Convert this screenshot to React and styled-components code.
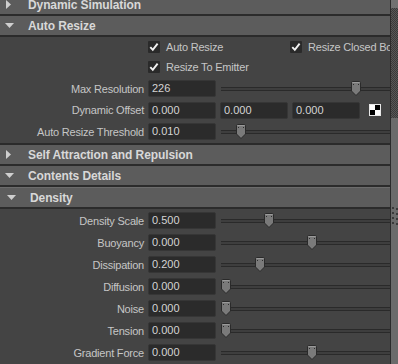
import styled, { createGlobalStyle } from 'styled-components';

const GlobalStyle = createGlobalStyle`
  html, body {
    margin: 0;
    padding: 0;
    background: #444444;
  }
  body {
    font-family: "Liberation Sans", Arial, sans-serif;
  }
`;

const autoResizeRows = [
  { label: 'Max Resolution', value: '226', pos: 135 },
];

const densityRows = [
  { label: 'Density Scale', value: '0.500', pos: 48 },
  { label: 'Buoyancy', value: '0.000', pos: 91 },
  { label: 'Dissipation', value: '0.200', pos: 39 },
  { label: 'Diffusion', value: '0.000', pos: 5 },
  { label: 'Noise', value: '0.000', pos: 5 },
  { label: 'Tension', value: '0.000', pos: 5 },
  { label: 'Gradient Force', value: '0.000', pos: 91 },
];

function Arrow({ open }) {
  return open ? (
    <svg width="9" height="5" viewBox="0 0 9 5">
      <path d="M0 0 H9 L4.5 5 Z" fill="#cfcfcf" />
    </svg>
  ) : (
    <svg width="5" height="9" viewBox="0 0 5 9">
      <path d="M0 0 L5 4.5 L0 9 Z" fill="#cfcfcf" />
    </svg>
  );
}

function Section({ title, open, nested }) {
  return (
    <Header $nested={nested}>
      <ArrowBox $nested={nested} $open={open}>
        <Arrow open={open} />
      </ArrowBox>
      {title}
    </Header>
  );
}

function Check({ label }) {
  return (
    <CheckItem>
      <Box>
        <svg width="12" height="12" viewBox="0 0 12 12">
          <path d="M2.3 6.2 L4.8 8.9 L9.6 2.6" fill="none" stroke="#f2f2f2" strokeWidth="1.9" />
        </svg>
      </Box>
      {label}
    </CheckItem>
  );
}

function Slider({ pos }) {
  return (
    <SliderBox>
      <Track />
      <Thumb style={{ left: pos - 5 }}>
        <svg width="10" height="15" viewBox="0 0 10 15">
          <path
            d="M0.5 1.5 Q0.5 0.5 1.5 0.5 H8.5 Q9.5 0.5 9.5 1.5 V10 L5 14.5 L0.5 10 Z"
            fill="#7a7a7a"
            stroke="#2a2a2a"
          />
          <path d="M1.5 1.5 H8.5" stroke="#9a9a9a" />
          <rect x="2" y="3" width="1" height="1" fill="#2e2e2e" />
          <rect x="7" y="3" width="1" height="1" fill="#2e2e2e" />
        </svg>
      </Thumb>
    </SliderBox>
  );
}

function SliderRow({ label, value, pos }) {
  return (
    <Row>
      <Label>{label}</Label>
      <Field>{value}</Field>
      <Slider pos={pos} />
    </Row>
  );
}

export default function App() {
  return (
    <>
      <GlobalStyle />
      <Window>
        <Panel>
          <Scroller>
            <Section title="Dynamic Simulation" />
            <Section title="Auto Resize" open />
            <Content $top={0} $bottom={3} $gap={4.5}>
              <CheckRow>
                <Check label="Auto Resize" />
                <Check label="Resize Closed Boundaries" />
              </CheckRow>
              <CheckRow>
                <Check label="Resize To Emitter" />
              </CheckRow>
              <Spacer />
              {autoResizeRows.map((r) => (
                <SliderRow key={r.label} {...r} />
              ))}
              <Row>
                <Label>Dynamic Offset</Label>
                <Fields>
                  <Field>0.000</Field>
                  <Field>0.000</Field>
                  <Field>0.000</Field>
                </Fields>
                <Picker>
                  <svg width="12" height="12" viewBox="0 0 12 12">
                    <rect x="0.5" y="0.5" width="11" height="11" fill="#ffffff" stroke="#e8e8e8" />
                    <rect x="6" y="1" width="5" height="5" fill="#000000" />
                    <rect x="1" y="6" width="5" height="5" fill="#000000" />
                  </svg>
                </Picker>
              </Row>
              <SliderRow label="Auto Resize Threshold" value="0.010" pos={20} />
            </Content>
            <Section title="Self Attraction and Repulsion" />
            <Section title="Contents Details" open />
            <Section title="Density" open nested />
            <Content $top={3} $bottom={4} $gap={5}>
              {densityRows.map((r) => (
                <SliderRow key={r.label} {...r} />
              ))}
            </Content>
          </Scroller>
        </Panel>
        <ScrollBar>
          <ScrollCap />
          <ScrollTrack />
          <ScrollThumb>
            <svg width="6" height="19" viewBox="0 0 6 19">
              {[0, 5, 10, 15].map((y) => (
                <g key={y} fill="#3a3a3a">
                  <rect x="0" y={y} width="2" height="2" />
                  <rect x="4" y={y + 1} width="2" height="2" />
                </g>
              ))}
            </svg>
          </ScrollThumb>
        </ScrollBar>
      </Window>
    </>
  );
}

const Window = styled.div`
  display: flex;
  width: 398px;
  height: 364px;
  overflow: hidden;
  background: #444444;
`;

const Panel = styled.div`
  flex: 1;
  min-width: 0;
  overflow: hidden;
  border-right: 1px solid #2b2b2b;
`;

const Scroller = styled.div`
  margin-top: -5px;
`;

const Header = styled.div`
  display: flex;
  align-items: center;
  height: 19px;
  background: #5c5c5c;
  border-top: ${(p) => (p.$nested ? '1px solid #6c6c6c' : 'none')};
  border-bottom: 2px solid #2b2b2b;
  color: #d8d8d8;
  font-weight: bold;
  font-size: 12px;
  letter-spacing: -0.1px;
  white-space: nowrap;
`;

const ArrowBox = styled.div`
  display: flex;
  align-items: center;
  width: ${(p) => (p.$nested ? 30 : 28)}px;
  padding-left: ${(p) => (p.$nested ? 7 : p.$open ? 5 : 6)}px;
  box-sizing: border-box;
  flex-shrink: 0;
`;

const Content = styled.div`
  display: flex;
  flex-direction: column;
  gap: ${(p) => p.$gap}px;
  padding: ${(p) => p.$top}px 0 ${(p) => p.$bottom}px;
  border-bottom: 2px solid #2b2b2b;
`;

const CheckRow = styled.div`
  display: flex;
  align-items: center;
  height: 20px;
  margin-bottom: -4.5px;
  padding-left: 148px;
  white-space: nowrap;
`;

const Spacer = styled.div`
  height: 3px;
  margin-bottom: -4.5px;
`;

const CheckItem = styled.div`
  display: flex;
  align-items: center;
  gap: 6px;
  width: 142px;
  flex-shrink: 0;
  color: #c6c6c6;
  font-size: 11px;
  letter-spacing: -0.2px;
`;

const Box = styled.div`
  display: flex;
  width: 12px;
  height: 12px;
  background: #2a2a2a;
  border-radius: 1px;
  flex-shrink: 0;
`;

const Row = styled.div`
  display: flex;
  align-items: center;
  height: 17px;
`;

const Label = styled.div`
  width: 144px;
  margin-right: 4px;
  text-align: right;
  color: #c6c6c6;
  font-size: 11px;
  letter-spacing: -0.2px;
  white-space: nowrap;
  flex-shrink: 0;
`;

const Field = styled.div`
  width: 68px;
  height: 17px;
  box-sizing: border-box;
  padding-left: 3px;
  background: #2b2b2b;
  border: 1px solid #363636;
  border-radius: 2px;
  color: #d4d4d4;
  font-size: 11px;
  line-height: 15px;
  flex-shrink: 0;
`;

const Fields = styled.div`
  display: flex;
  gap: 4px;
`;

const Picker = styled.div`
  display: flex;
  margin-left: 9px;
`;

const SliderBox = styled.div`
  position: relative;
  flex: 1;
  display: flex;
  align-items: center;
  height: 17px;
  margin-left: 5px;
`;

const Track = styled.div`
  flex: 1;
  height: 4px;
  box-sizing: border-box;
  border-top: 1px solid #2a2a2a;
  border-bottom: 1px solid #2a2a2a;
  background: #3e3e3e;
`;

const Thumb = styled.div`
  position: absolute;
  top: 1px;
  display: flex;
`;

const ScrollBar = styled.div`
  display: flex;
  flex-direction: column;
  width: 7px;
  background: #6b6b6b;
`;

const ScrollCap = styled.div`
  height: 8px;
  background: #717171;
`;

const ScrollTrack = styled.div`
  height: 110px;
  background: repeating-conic-gradient(#3a3a3a 0 25%, #585858 0 50%) 0 0 / 2px 2px;
`;

const ScrollThumb = styled.div`
  flex: 1;
  display: flex;
  justify-content: center;
  padding-top: 89px;
  background: #6b6b6b;
`;
